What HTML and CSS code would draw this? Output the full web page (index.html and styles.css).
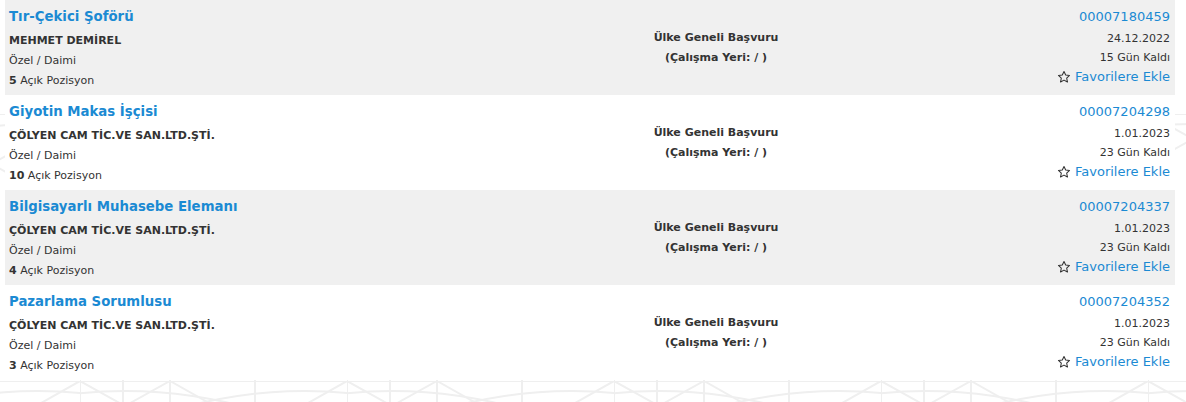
FILE: index.html
```html
<!DOCTYPE html>
<html lang="tr">
<head>
<meta charset="utf-8">
<title>İlanlar</title>
<link rel="stylesheet" href="styles.css">
</head>
<body>
<svg class="backdrop" aria-hidden="true">
  <defs>
    <pattern id="deco" x="-187" y="381" width="267" height="267" patternUnits="userSpaceOnUse">
      <g fill="none" stroke="#efefef" stroke-width="2">
        <line x1="0" y1="0" x2="267" y2="0"/>
        <line x1="0" y1="0" x2="0" y2="267"/>
        <line x1="43" y1="0" x2="43" y2="267"/>
        <line x1="90" y1="0" x2="90" y2="267"/>
        <line x1="175" y1="0" x2="175" y2="267"/>
        <line x1="0" y1="0" x2="90" y2="50"/>
        <line x1="90" y1="0" x2="0" y2="50"/>
        <line x1="90" y1="0" x2="267" y2="100"/>
        <line x1="267" y1="0" x2="90" y2="100"/>
        <path d="M-90 30 Q 45 -10 180 30"/>
        <path d="M90 30 Q 225 -10 360 30"/>
      </g>
    </pattern>
  </defs>
  <rect width="100%" height="100%" fill="url(#deco)"/>
</svg>

<div class="list">
  <div class="job odd">
    <div class="col-main">
      <a class="title" href="#">Tır-Çekici Şoförü</a>
      <div class="company">MEHMET DEMİREL</div>
      <div class="line">Özel / Daimi</div>
      <div class="line"><b>5</b> Açık Pozisyon</div>
    </div>
    <div class="col-mid">
      <div>Ülke Geneli Başvuru</div>
      <div>(Çalışma Yeri: / )</div>
    </div>
    <div class="col-side">
      <a class="code" href="#">00007180459</a>
      <div class="small">24.12.2022</div>
      <div class="small">15 Gün Kaldı</div>
      <a class="fav" href="#"><svg class="star" viewBox="0 0 24 24"><path d="M12 2.5l2.9 6.1 6.6.8-4.9 4.6 1.3 6.6L12 17.3l-5.9 3.3 1.3-6.6-4.9-4.6 6.6-.8z"/></svg>Favorilere Ekle</a>
    </div>
  </div>

  <div class="job">
    <div class="col-main">
      <a class="title" href="#">Giyotin Makas İşçisi</a>
      <div class="company">ÇÖLYEN CAM TİC.VE SAN.LTD.ŞTİ.</div>
      <div class="line">Özel / Daimi</div>
      <div class="line"><b>10</b> Açık Pozisyon</div>
    </div>
    <div class="col-mid">
      <div>Ülke Geneli Başvuru</div>
      <div>(Çalışma Yeri: / )</div>
    </div>
    <div class="col-side">
      <a class="code" href="#">00007204298</a>
      <div class="small">1.01.2023</div>
      <div class="small">23 Gün Kaldı</div>
      <a class="fav" href="#"><svg class="star" viewBox="0 0 24 24"><path d="M12 2.5l2.9 6.1 6.6.8-4.9 4.6 1.3 6.6L12 17.3l-5.9 3.3 1.3-6.6-4.9-4.6 6.6-.8z"/></svg>Favorilere Ekle</a>
    </div>
  </div>

  <div class="job odd">
    <div class="col-main">
      <a class="title" href="#">Bilgisayarlı Muhasebe Elemanı</a>
      <div class="company">ÇÖLYEN CAM TİC.VE SAN.LTD.ŞTİ.</div>
      <div class="line">Özel / Daimi</div>
      <div class="line"><b>4</b> Açık Pozisyon</div>
    </div>
    <div class="col-mid">
      <div>Ülke Geneli Başvuru</div>
      <div>(Çalışma Yeri: / )</div>
    </div>
    <div class="col-side">
      <a class="code" href="#">00007204337</a>
      <div class="small">1.01.2023</div>
      <div class="small">23 Gün Kaldı</div>
      <a class="fav" href="#"><svg class="star" viewBox="0 0 24 24"><path d="M12 2.5l2.9 6.1 6.6.8-4.9 4.6 1.3 6.6L12 17.3l-5.9 3.3 1.3-6.6-4.9-4.6 6.6-.8z"/></svg>Favorilere Ekle</a>
    </div>
  </div>

  <div class="job">
    <div class="col-main">
      <a class="title" href="#">Pazarlama Sorumlusu</a>
      <div class="company">ÇÖLYEN CAM TİC.VE SAN.LTD.ŞTİ.</div>
      <div class="line">Özel / Daimi</div>
      <div class="line"><b>3</b> Açık Pozisyon</div>
    </div>
    <div class="col-mid">
      <div>Ülke Geneli Başvuru</div>
      <div>(Çalışma Yeri: / )</div>
    </div>
    <div class="col-side">
      <a class="code" href="#">00007204352</a>
      <div class="small">1.01.2023</div>
      <div class="small">23 Gün Kaldı</div>
      <a class="fav" href="#"><svg class="star" viewBox="0 0 24 24"><path d="M12 2.5l2.9 6.1 6.6.8-4.9 4.6 1.3 6.6L12 17.3l-5.9 3.3 1.3-6.6-4.9-4.6 6.6-.8z"/></svg>Favorilere Ekle</a>
    </div>
  </div>
</div>
</body>
</html>
```

FILE: styles.css
```css
html, body {
  margin: 0;
  padding: 0;
}
body {
  position: relative;
  width: 1186px;
  height: 402px;
  overflow: hidden;
  background: #fff;
  font-family: "DejaVu Sans", Verdana, sans-serif;
  color: #333;
}
.backdrop {
  position: absolute;
  left: 0;
  top: 0;
  width: 1186px;
  height: 402px;
  z-index: 0;
}
.list {
  position: relative;
  z-index: 1;
  margin: 0 11px 0 5px;
}
.job {
  display: grid;
  grid-template-columns: 48% 25.8% 1fr;
  height: 95px;
  box-sizing: border-box;
  padding: 0 5px 0 4px;
  background: #fff;
}
.job.odd {
  background: #f0f0f0;
}
.col-main {
  padding-top: 7px;
  display: flex;
  flex-direction: column;
}
.title {
  font-size: 13.3px;
  font-weight: bold;
  line-height: 20px;
  color: #1b8ad3;
  text-decoration: none;
  margin-bottom: 4px;
  white-space: nowrap;
}
.company {
  font-size: 11px;
  font-weight: bold;
  line-height: 20px;
  color: #333;
}
.line {
  font-size: 11px;
  line-height: 20px;
  color: #333;
}
.line b {
  font-weight: bold;
}
.col-mid {
  align-self: center;
  text-align: center;
  font-size: 11px;
  font-weight: bold;
  line-height: 20px;
  color: #333;
}
.col-side {
  padding-top: 7px;
  display: flex;
  flex-direction: column;
  align-items: flex-end;
}
.code {
  font-size: 13px;
  line-height: 20px;
  margin-bottom: 2px;
  color: #1b8ad3;
  text-decoration: none;
}
.small {
  font-size: 11px;
  line-height: 19px;
  color: #333;
}
.fav {
  display: flex;
  align-items: center;
  gap: 4px;
  font-size: 13px;
  line-height: 20px;
  color: #1b8ad3;
  text-decoration: none;
}
.star {
  width: 14px;
  height: 14px;
  fill: none;
  stroke: #333;
  stroke-width: 1.8;
  stroke-linejoin: round;
}
```
